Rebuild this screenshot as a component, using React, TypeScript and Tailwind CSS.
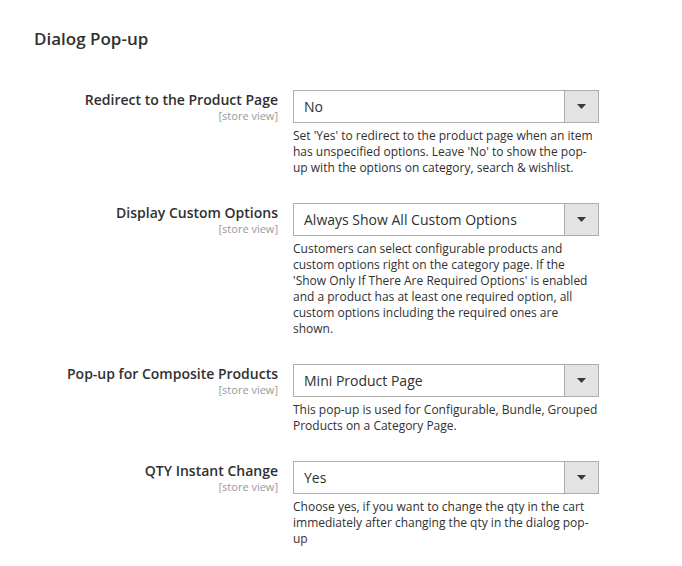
const fields = [
  {
    label: 'Redirect to the Product Page',
    value: 'No',
    note: "Set 'Yes' to redirect to the product page when an item has unspecified options. Leave 'No' to show the pop-up with the options on category, search & wishlist.",
  },
  {
    label: 'Display Custom Options',
    value: 'Always Show All Custom Options',
    note: "Customers can select configurable products and custom options right on the category page. If the 'Show Only If There Are Required Options' is enabled and a product has at least one required option, all custom options including the required ones are shown.",
  },
  {
    label: 'Pop-up for Composite Products',
    value: 'Mini Product Page',
    note: 'This pop-up is used for Configurable, Bundle, Grouped Products on a Category Page.',
  },
  {
    label: 'QTY Instant Change',
    value: 'Yes',
    note: 'Choose yes, if you want to change the qty in the cart immediately after changing the qty in the dialog pop-up',
  },
]

function SelectBox({ value }: { value: string }) {
  return (
    <div className="flex h-[33px] w-[306px] border border-[#adadad] bg-white">
      <div className="flex flex-1 items-center pl-[10px] text-[14px] text-[#303030]">{value}</div>
      <div className="flex w-[34px] items-center justify-center border-l border-[#adadad] bg-[#e3e3e3]">
        <svg width="9" height="5" viewBox="0 0 9 5">
          <path d="M0 0h9L4.5 5z" fill="#41362f" />
        </svg>
      </div>
    </div>
  )
}

export default function App() {
  return (
    <div className="min-h-screen bg-white pl-[34px] pt-[27px] font-['Open_Sans',sans-serif] text-[#303030]">
      <h2 className="text-[17px] font-semibold leading-[23px]">Dialog Pop-up</h2>
      <div className="mt-[40px] flex flex-col gap-[27px]">
        {fields.map(f => (
          <div key={f.label} className="flex">
            <div className="w-[244px] text-right">
              <p className="text-[14px] font-semibold leading-[19px]">{f.label}</p>
              <p className="text-[11px] leading-[13px] text-[#999]">[store view]</p>
            </div>
            <div className="ml-[15px] w-[306px]">
              <SelectBox value={f.value} />
              <p className="mt-[5px] text-[12px] leading-[16px]">{f.note}</p>
            </div>
          </div>
        ))}
      </div>
    </div>
  )
}
